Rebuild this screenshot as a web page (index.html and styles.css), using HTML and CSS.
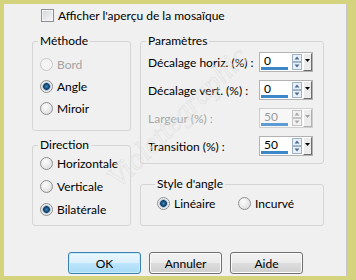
FILE: index.html
```html
<!DOCTYPE html>
<html lang="fr">
<head>
    <meta charset="UTF-8">
    <title>Mosaïque - Angle</title>
    <link rel="stylesheet" href="styles.css">
</head>
<body>
    <div class="frame">
        <div class="dialog">
            <label class="check-row"><span class="checkbox"></span>Afficher l'aperçu de la mosaïque</label>

            <div class="columns">
                <div class="col-left">
                    <fieldset class="group group-methode">
                        <legend>Méthode</legend>
                        <div class="radio-row disabled"><span class="radio"></span>Bord</div>
                        <div class="radio-row"><span class="radio checked"></span>Angle</div>
                        <div class="radio-row"><span class="radio"></span>Miroir</div>
                    </fieldset>
                    <fieldset class="group group-direction">
                        <legend>Direction</legend>
                        <div class="radio-row"><span class="radio"></span>Horizontale</div>
                        <div class="radio-row"><span class="radio"></span>Verticale</div>
                        <div class="radio-row"><span class="radio checked"></span>Bilatérale</div>
                    </fieldset>
                </div>

                <div class="col-right">
                    <fieldset class="group group-params">
                        <legend>Paramètres</legend>
                        <div class="spin-row">
                            <span class="spin-label">Décalage horiz. (%) :</span>
                            <div class="spin">
                                <span class="spin-value">0</span>
                                <svg class="spin-arrows" width="10" height="16" viewBox="0 0 10 16"><rect x="0.5" y="0.5" width="9" height="7" fill="#e9f0f7" stroke="#9fb3c8"/><rect x="0.5" y="8.5" width="9" height="7" fill="#e9f0f7" stroke="#9fb3c8"/><path d="M2.5 5.5 L5 2.5 L7.5 5.5Z" fill="#4b6d93"/><path d="M2.5 10.5 L5 13.5 L7.5 10.5Z" fill="#4b6d93"/></svg>
                                <span class="spin-drop"><svg width="5" height="3" viewBox="0 0 5 3"><path d="M0 0H5L2.5 3Z" fill="#000"/></svg></span>
                            </div>
                        </div>
                        <div class="spin-row">
                            <span class="spin-label">Décalage vert. (%) :</span>
                            <div class="spin">
                                <span class="spin-value">0</span>
                                <svg class="spin-arrows" width="10" height="16" viewBox="0 0 10 16"><rect x="0.5" y="0.5" width="9" height="7" fill="#e9f0f7" stroke="#9fb3c8"/><rect x="0.5" y="8.5" width="9" height="7" fill="#e9f0f7" stroke="#9fb3c8"/><path d="M2.5 5.5 L5 2.5 L7.5 5.5Z" fill="#4b6d93"/><path d="M2.5 10.5 L5 13.5 L7.5 10.5Z" fill="#4b6d93"/></svg>
                                <span class="spin-drop"><svg width="5" height="3" viewBox="0 0 5 3"><path d="M0 0H5L2.5 3Z" fill="#000"/></svg></span>
                            </div>
                        </div>
                        <div class="spin-row disabled">
                            <span class="spin-label">Largeur (%) :</span>
                            <div class="spin">
                                <span class="spin-value">50</span>
                                <svg class="spin-arrows" width="10" height="16" viewBox="0 0 10 16"><rect x="0.5" y="0.5" width="9" height="7" fill="#f2f2f2" stroke="#c4c4c4"/><rect x="0.5" y="8.5" width="9" height="7" fill="#f2f2f2" stroke="#c4c4c4"/><path d="M2.5 5.5 L5 2.5 L7.5 5.5Z" fill="#a8a8a8"/><path d="M2.5 10.5 L5 13.5 L7.5 10.5Z" fill="#a8a8a8"/></svg>
                                <span class="spin-drop"><svg width="5" height="3" viewBox="0 0 5 3"><path d="M0 0H5L2.5 3Z" fill="#a0a0a0"/></svg></span>
                            </div>
                        </div>
                        <div class="spin-row">
                            <span class="spin-label">Transition (%) :</span>
                            <div class="spin">
                                <span class="spin-value">50</span>
                                <svg class="spin-arrows" width="10" height="16" viewBox="0 0 10 16"><rect x="0.5" y="0.5" width="9" height="7" fill="#e9f0f7" stroke="#9fb3c8"/><rect x="0.5" y="8.5" width="9" height="7" fill="#e9f0f7" stroke="#9fb3c8"/><path d="M2.5 5.5 L5 2.5 L7.5 5.5Z" fill="#4b6d93"/><path d="M2.5 10.5 L5 13.5 L7.5 10.5Z" fill="#4b6d93"/></svg>
                                <span class="spin-drop"><svg width="5" height="3" viewBox="0 0 5 3"><path d="M0 0H5L2.5 3Z" fill="#000"/></svg></span>
                            </div>
                        </div>
                    </fieldset>
                    <fieldset class="group group-style">
                        <legend>Style d'angle</legend>
                        <div class="style-row">
                            <div class="radio-row style-item"><span class="radio checked"></span>Linéaire</div>
                            <div class="radio-row"><span class="radio"></span>Incurvé</div>
                        </div>
                    </fieldset>
                </div>
            </div>

            <div class="buttons">
                <button class="btn default">OK</button>
                <button class="btn">Annuler</button>
                <button class="btn">Aide</button>
            </div>
        </div>
        <span class="watermark">Violettegraphic</span>
    </div>
</body>
</html>
```

FILE: styles.css
```css
* {
    box-sizing: border-box;
}

body {
    margin: 0;
    font-family: Lato, "Noto Sans", sans-serif;
    font-size: 12px;
    color: #000;
}

.frame {
    position: relative;
    width: 356px;
    height: 280px;
    padding: 4px 9px 4px 4px;
    background-color: #d5d37d;
    overflow: hidden;
}

.dialog {
    height: 100%;
    padding-top: 4px;
    background-color: #f0f0f0;
    box-shadow: inset -1px 0 #c4c4c4;
}

.check-row {
    display: flex;
    align-items: center;
    height: 15px;
    margin-left: 37px;
}

.checkbox {
    width: 13px;
    height: 13px;
    margin-right: 4px;
    border: 1px solid #8e8f8f;
    background: linear-gradient(135deg, #d2d5da, #f8f8f8);
    box-shadow: inset 0 0 0 1px #f4f4f4;
}

.columns {
    display: flex;
    gap: 9px;
    margin: 11px 0 0 28px;
}

.col-left {
    display: flex;
    flex-direction: column;
    gap: 7px;
    width: 99px;
}

.col-right {
    display: flex;
    flex-direction: column;
    gap: 13px;
    width: 184px;
}

.group {
    min-width: 0;
    margin: 0;
    border: 1px solid #d5d5d5;
    border-radius: 3px;
}

.group legend {
    margin-left: -2px;
    padding: 0 2px;
    line-height: 14px;
}

.group-methode {
    padding: 5px 7px 11px;
}

.group-direction {
    padding: 0 7px 4px;
}

.group-direction .radio-row {
    height: 23px;
}

.group-params {
    display: flex;
    flex-direction: column;
    gap: 8px;
    padding: 4px 10px 7px 7px;
}

.group-style {
    padding: 1px 7px 11px 16px;
}

.radio-row {
    display: flex;
    align-items: center;
    height: 22px;
}

.radio-row.disabled {
    color: #a3a3a3;
}

.radio {
    flex: none;
    width: 13px;
    height: 13px;
    margin-right: 4px;
    border: 1px solid #8e8f8f;
    border-radius: 50%;
    background: radial-gradient(circle at 40% 35%, #fdfdfd, #d6d6d6);
}

.radio.checked {
    background: radial-gradient(circle, #3f8ccb 0, #1b4f7e 2px, #123c63 3px, #86a9c6 3.6px, #e6e6e6 4.5px, #f7f7f7 6px);
}

.disabled .radio {
    border-color: #c9c9c9;
    background: #f4f4f4;
}

.style-row {
    display: flex;
}

.style-item {
    width: 81px;
}

.spin-row {
    display: flex;
    align-items: center;
    height: 20px;
}

.spin-label {
    width: 111px;
    white-space: nowrap;
}

.spin-row.disabled .spin-label {
    color: #a6a6a6;
}

.spin {
    display: flex;
    align-items: flex-start;
    width: 54px;
    height: 20px;
    border: 1px solid #b3b3b3;
    background-color: #fff;
}

.spin-value {
    width: 27px;
    height: 17px;
    margin: 0 4px 0 1px;
    padding-left: 3px;
    line-height: 15px;
    border-bottom: 3px solid #3d87c8;
}

.spin-arrows {
    margin-top: 1px;
}

.spin-drop {
    display: flex;
    justify-content: center;
    width: 9px;
    height: 18px;
    margin-left: 1px;
    padding-top: 5px;
    border-top: 1px solid #fff;
    border-left: 1px solid #fff;
    border-right: 1px solid #6d6d6d;
    border-bottom: 1px solid #6d6d6d;
    background-color: #ececec;
}

.spin-row.disabled .spin {
    border-color: #cfcfcf;
    background-color: #f7f7f7;
}

.spin-row.disabled .spin-value {
    color: #9a9a9a;
    border-bottom-color: #5c9bd3;
}

.spin-row.disabled .spin-drop {
    border-right-color: #b0b0b0;
    border-bottom-color: #b0b0b0;
}

.buttons {
    display: flex;
    gap: 8px;
    margin-top: 26px;
    padding-left: 64px;
}

.btn {
    width: 73px;
    height: 22px;
    padding: 0;
    font: inherit;
    color: #000;
    border: 1px solid #707070;
    border-radius: 3px;
    background: linear-gradient(#f2f2f2 0, #ebebeb 50%, #dddddd 51%, #cfcfcf 100%);
    box-shadow: inset 0 0 0 1px #fbfbfb;
}

.btn.default {
    border-color: #3c7fb1;
    background: linear-gradient(#eaf6fd 0, #d9f0fc 50%, #bee6fd 51%, #a7d9f5 100%);
    box-shadow: inset 0 0 0 1px #c6ecfb;
}

.watermark {
    position: absolute;
    left: 85px;
    top: 100px;
    font-family: "Liberation Serif", serif;
    font-style: italic;
    font-size: 30px;
    color: transparent;
    -webkit-text-stroke: 0.5px #dedede;
    transform: rotate(-45deg);
    pointer-events: none;
}
```
